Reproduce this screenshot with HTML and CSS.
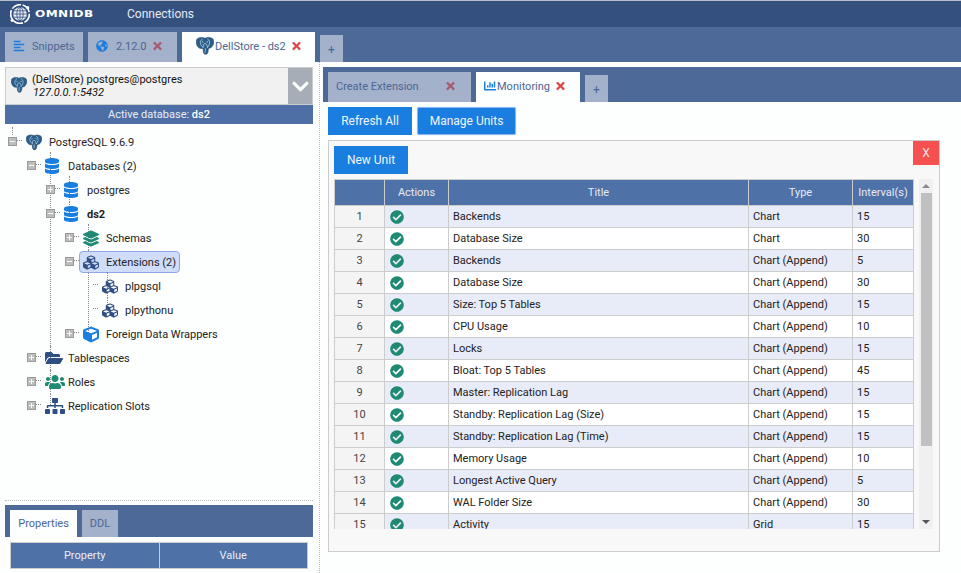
FILE: index.html
```html
<!DOCTYPE html>
<html lang="en">
<head>
<meta charset="utf-8">
<title>OmniDB</title>
<link rel="stylesheet" href="styles.css">
</head>
<body>
<svg class="defs" width="0" height="0" aria-hidden="true">
  <defs>
    <symbol id="i-db" viewBox="0 0 448 512"><path d="M448 73.143v45.714C448 159.143 347.667 192 224 192S0 159.143 0 118.857V73.143C0 32.857 100.333 0 224 0s224 32.857 224 73.143zM448 176v102.857C448 319.143 347.667 352 224 352S0 319.143 0 278.857V176c48.125 33.143 136.208 48.572 224 48.572S399.874 209.143 448 176zm0 160v102.857C448 479.143 347.667 512 224 512S0 479.143 0 438.857V336c48.125 33.143 136.208 48.572 224 48.572S399.874 369.143 448 336z"/></symbol>
    <symbol id="i-check" viewBox="0 0 512 512"><path d="M504 256c0 136.967-111.033 248-248 248S8 392.967 8 256 119.033 8 256 8s248 111.033 248 248zM227.314 387.314l184-184c6.248-6.248 6.248-16.379 0-22.627l-22.627-22.627c-6.248-6.249-16.379-6.249-22.628 0L216 308.118l-70.059-70.059c-6.248-6.248-16.379-6.248-22.628 0l-22.627 22.627c-6.248 6.248-6.248 16.379 0 22.627l104 104c6.249 6.249 16.379 6.249 22.628.001z"/></symbol>
    <symbol id="i-times" viewBox="0 0 352 512"><path d="M242.72 256l100.07-100.07c12.28-12.28 12.28-32.19 0-44.48l-22.24-22.24c-12.28-12.28-32.19-12.28-44.48 0L176 189.28 75.93 89.21c-12.28-12.28-32.19-12.28-44.48 0L9.21 111.45c-12.28 12.28-12.28 32.19 0 44.48L109.28 256 9.21 356.07c-12.28 12.28-12.28 32.19 0 44.48l22.24 22.24c12.28 12.28 32.2 12.28 44.48 0L176 322.72l100.07 100.07c12.28 12.28 32.2 12.28 44.48 0l22.24-22.24c12.28-12.28 12.28-32.19 0-44.48L242.72 256z"/></symbol>
    <symbol id="i-chevron" viewBox="0 0 448 512"><path d="M207.029 381.476L12.686 187.132c-9.373-9.373-9.373-24.569 0-33.941l22.667-22.667c9.357-9.357 24.522-9.375 33.901-.04L224 284.505l154.745-154.021c9.379-9.335 24.544-9.317 33.901.04l22.667 22.667c9.373 9.373 9.373 24.569 0 33.941L240.971 381.476c-9.373 9.372-24.569 9.372-33.942 0z"/></symbol>
    <symbol id="i-users" viewBox="0 0 640 512"><path d="M96 224c35.3 0 64-28.7 64-64s-28.7-64-64-64-64 28.7-64 64 28.7 64 64 64zm448 0c35.3 0 64-28.7 64-64s-28.7-64-64-64-64 28.7-64 64 28.7 64 64 64zm32 32h-64c-17.6 0-33.5 7.1-45.1 18.6 40.3 22.1 68.9 62 75.1 109.4h66c17.7 0 32-14.3 32-32v-32c0-35.3-28.7-64-64-64zm-256 0c61.9 0 112-50.1 112-112S381.9 32 320 32 208 82.1 208 144s50.1 112 112 112zm76.8 32h-8.3c-20.8 10-43.9 16-68.5 16s-47.6-6-68.5-16h-8.3C179.6 288 128 339.6 128 403.2V432c0 26.5 21.5 48 48 48h288c26.5 0 48-21.5 48-48v-28.8c0-63.6-51.6-115.2-115.2-115.2zm-223.7-13.4C161.5 263.1 145.6 256 128 256H64c-35.3 0-64 28.7-64 64v32c0 17.7 14.3 32 32 32h65.9c6.3-47.4 34.9-87.3 75.2-109.4z"/></symbol>
    <symbol id="i-sitemap" viewBox="0 0 640 512"><path d="M128 352H32c-17.67 0-32 14.33-32 32v96c0 17.67 14.33 32 32 32h96c17.67 0 32-14.33 32-32v-96c0-17.67-14.33-32-32-32zm-24-80h192v48h48v-48h192v48h48v-57.59c0-21.17-17.23-38.41-38.41-38.41H344v-64h40c17.67 0 32-14.33 32-32V32c0-17.67-14.33-32-32-32H256c-17.67 0-32 14.33-32 32v96c0 17.67 14.33 32 32 32h40v64H94.41C73.23 224 56 241.23 56 262.41V320h48v-48zm264 80h-96c-17.67 0-32 14.33-32 32v96c0 17.67 14.33 32 32 32h96c17.67 0 32-14.33 32-32v-96c0-17.67-14.33-32-32-32zm240 0h-96c-17.67 0-32 14.33-32 32v96c0 17.67 14.33 32 32 32h96c17.67 0 32-14.33 32-32v-96c0-17.67-14.33-32-32-32z"/></symbol>
    <symbol id="i-folder" viewBox="0 0 576 512"><path d="M572.694 292.093L500.27 416.248A63.997 63.997 0 0 1 444.989 448H45.025c-18.523 0-30.064-20.093-20.731-36.093l72.424-124.155A64 64 0 0 1 152 256h399.964c18.523 0 30.064 20.093 20.73 36.093zM152 224h328v-48c0-26.51-21.49-48-48-48H272l-64-64H48C21.49 64 0 85.49 0 112v278.046l69.077-118.418C86.214 242.25 117.989 224 152 224z"/></symbol>
    <symbol id="i-cube" viewBox="0 0 512 512"><path d="M239.1 6.3l-208 78c-18.7 7-31.1 25-31.1 45v225.1c0 18.2 10.3 34.8 26.5 42.9l208 104c13.5 6.8 29.4 6.8 42.9 0l208-104c16.3-8.1 26.5-24.8 26.5-42.9V129.3c0-20-12.4-37.9-31.1-44.9l-208-78C262 2.2 250 2.2 239.1 6.3zM256 68.4l192 72v1.1l-192 78-192-78v-1.1l192-72zm32 356V275.5l160-65v133.9l-160 80z"/></symbol>
    <symbol id="i-cubes" viewBox="0 0 512 512"><path d="M488.6 250.2L392 214V105.5c0-15-9.3-28.4-23.4-33.7l-100-37.5c-8.1-3.1-17.1-3.1-25.3 0l-100 37.5c-14.1 5.3-23.4 18.7-23.4 33.7V214l-96.6 36.2C9.3 255.5 0 268.9 0 283.9V394c0 13.6 7.7 26.1 19.9 32.2l100 50c10.1 5.1 22.1 5.1 32.2 0l103.9-52 103.9 52c10.1 5.1 22.1 5.1 32.2 0l100-50c12.2-6.1 19.9-18.6 19.9-32.2V283.9c0-15-9.3-28.4-23.4-33.7zM358 214.8l-85 31.9v-68.2l85-37v73.3zM154 104.1l102-38.2 102 38.2v.6l-102 41.4-102-41.4v-.6zm84 291.1l-85 42.5v-79.1l85-38.8v75.4zm0-112l-102 41.4-102-41.4v-.6l102-38.2 102 38.2v.6zm240 112l-85 42.5v-79.1l85-38.8v75.4zm0-112l-102 41.4-102-41.4v-.6l102-38.2 102 38.2v.6z"/></symbol>
    <symbol id="i-layers" viewBox="0 0 512 512"><path d="M12.41 148.02l232.94 105.67c6.8 3.09 14.49 3.09 21.29 0l232.94-105.67c16.55-7.51 16.55-32.52 0-40.03L266.65 2.31a25.607 25.607 0 0 0-21.29 0L12.41 107.98c-16.55 7.51-16.55 32.53 0 40.04zm487.18 88.28l-58.09-26.33-161.64 73.27c-7.56 3.43-15.59 5.17-23.86 5.17s-16.29-1.74-23.86-5.17L70.51 209.97l-58.1 26.33c-16.55 7.5-16.55 32.5 0 40l232.94 105.59c6.8 3.08 14.49 3.08 21.29 0L499.59 276.3c16.55-7.5 16.55-32.5 0-40zm0 127.8l-57.87-26.23-161.86 73.37c-7.56 3.43-15.59 5.17-23.86 5.17s-16.29-1.74-23.86-5.17L70.29 337.87 12.41 364.1c-16.55 7.5-16.55 32.5 0 40l232.94 105.59c6.8 3.08 14.49 3.08 21.29 0L499.59 404.1c16.55-7.5 16.55-32.5 0-40z"/></symbol>
    <symbol id="i-align" viewBox="0 0 448 512"><path d="M12.83 352h262.34A12.82 12.82 0 0 0 288 339.17v-38.34A12.82 12.82 0 0 0 275.17 288H12.83A12.82 12.82 0 0 0 0 300.83v38.34A12.82 12.82 0 0 0 12.83 352zm0-256h262.34A12.82 12.82 0 0 0 288 83.17V44.83A12.82 12.82 0 0 0 275.17 32H12.83A12.82 12.82 0 0 0 0 44.83v38.34A12.82 12.82 0 0 0 12.83 96zM432 160H16a16 16 0 0 0-16 16v32a16 16 0 0 0 16 16h416a16 16 0 0 0 16-16v-32a16 16 0 0 0-16-16zm0 256H16a16 16 0 0 0-16 16v32a16 16 0 0 0 16 16h416a16 16 0 0 0 16-16v-32a16 16 0 0 0-16-16z"/></symbol>
    <symbol id="i-chart" viewBox="0 0 512 512"><path d="M332.8 320h38.4c6.4 0 12.8-6.4 12.8-12.8V172.8c0-6.4-6.4-12.8-12.8-12.8h-38.4c-6.4 0-12.8 6.4-12.8 12.8v134.4c0 6.4 6.4 12.8 12.8 12.8zm96 0h38.4c6.4 0 12.8-6.4 12.8-12.8V76.8c0-6.4-6.4-12.8-12.8-12.8h-38.4c-6.4 0-12.8 6.4-12.8 12.8v230.4c0 6.4 6.4 12.8 12.8 12.8zm-288 0h38.4c6.4 0 12.8-6.4 12.8-12.8v-70.4c0-6.4-6.4-12.8-12.8-12.8h-38.4c-6.4 0-12.8 6.4-12.8 12.8v70.4c0 6.4 6.4 12.8 12.8 12.8zm96 0h38.4c6.4 0 12.8-6.4 12.8-12.8V108.8c0-6.4-6.4-12.8-12.8-12.8h-38.4c-6.4 0-12.8 6.4-12.8 12.8v198.4c0 6.4 6.4 12.8 12.8 12.8zM496 384H64V80c0-8.84-7.16-16-16-16H16C7.16 64 0 71.16 0 80v336c0 17.67 14.33 32 32 32h464c8.84 0 16-7.16 16-16v-32c0-8.84-7.16-16-16-16z"/></symbol>
    <symbol id="i-globe" viewBox="0 0 496 512"><path d="M248 8C111.03 8 0 119.03 0 256s111.03 248 248 248 248-111.03 248-248S384.97 8 248 8zm82.29 357.6c-3.9 3.88-7.99 7.95-11.31 11.28-2.99 3-5.1 6.7-6.17 10.71-1.51 5.66-2.73 11.38-4.77 16.87l-17.39 46.85c-13.76 3-28 4.69-42.65 4.69v-27.38c1.69-12.62-7.64-36.26-22.63-51.25-6-6-9.37-14.14-9.37-22.63v-32.01c0-11.64-6.27-22.34-16.46-27.97-14.37-7.95-34.81-19.06-48.81-26.11-11.48-5.78-22.1-13.14-31.65-21.75l-.8-.72a114.792 114.792 0 0 1-18.06-20.74c-9.38-13.77-24.66-36.42-34.59-51.14 20.47-45.5 57.36-82.04 103.2-101.89l24.01 12.01C203.48 89.74 216 82.01 216 70.11v-11.3c7.99-1.29 16.12-2.11 24.48-2.45l28.3 28.3c6.25 6.25 6.25 16.38 0 22.63L264 112l-10.34 10.34c-3.12 3.12-3.12 8.19 0 11.31l4.69 4.69c3.12 3.12 3.12 8.19 0 11.31l-8 8a8.008 8.008 0 0 1-5.66 2.34h-8.99c-2.08 0-4.08.81-5.58 2.27l-9.92 9.65a8.008 8.008 0 0 0-1.58 9.31l15.59 31.19c2.66 5.32-1.21 11.58-7.15 11.58h-5.64c-1.93 0-3.79-.7-5.24-1.96l-9.28-8.06a16.017 16.017 0 0 0-15.55-3.1l-31.17 10.39a11.95 11.95 0 0 0-8.17 11.34c0 4.53 2.56 8.66 6.61 10.69l11.08 5.54c9.41 4.71 19.79 7.16 30.31 7.16s22.59 27.29 32 32h66.75c8.49 0 16.62 3.37 22.63 9.37l13.69 13.69a30.503 30.503 0 0 1 8.93 21.57 46.536 46.536 0 0 1-13.72 32.98zM417 274.25c-5.79-1.45-10.84-5-14.15-9.97l-17.98-26.97a23.97 23.97 0 0 1 0-26.62l19.59-29.38c2.32-3.47 5.5-6.29 9.24-8.15l12.98-6.49C440.2 193.59 448 223.87 448 256c0 8.67-.74 17.16-1.82 25.54L417 274.25z"/></symbol>
    <symbol id="i-pg" viewBox="0 0 24 24">
      <path fill="#2a5f8c" stroke="#1d3f60" stroke-width=".8" d="M1.500 2.500C5 .2 9 .2 12 1.800 15 .2 19 .2 22.500 2.500c2.300 3 1.300 7.500-1.300 10.500-1 1.500-3 2-4.700 2L16 20c-.5 3-4 4-5.500 2-1-1.500-1-5-1-7-2.500.5-4.500.5-6-1C.3 11-.7 5.500 1.500 2.500z"/>
      <path fill="none" stroke="#dce7f1" stroke-width=".85" stroke-linecap="round" stroke-linejoin="round" d="M8.500 2.600C6 4 5.400 7 6.200 9.500c.5 1.500 1.600 3 3.300 4.200M15.500 2.600c2.500 1.400 3.100 4.400 2.300 6.900-.5 1.500-1.400 3-2.300 4.200M9.500 13.700c.3-2 .2-5 2.500-5s2.800 2.800 3.300 5M12.500 15.500c0 2 0 3.500-.5 5"/>
      <circle cx="9" cy="6.500" r=".8" fill="#dce7f1"/>
      <circle cx="15" cy="6.500" r=".8" fill="#dce7f1"/>
    </symbol>
  </defs>
</svg>

<div class="topline"></div>
<header class="header">
  <div class="logo">
    <svg class="logo-mark" viewBox="1 1 22 22" fill="none" stroke="#fff">
      <circle cx="12" cy="12" r="10.300" stroke-width="1.800" stroke-dasharray="11 1.800"/>
      <circle cx="12" cy="12" r="7.500" fill="#e8edf5" stroke="none"/>
      <g stroke="#34507e" stroke-width=".9"><ellipse cx="12" cy="12" rx="3.500" ry="7.500"/><path d="M12 4.500v15M4.500 12h15M5.500 8.500h13M5.500 15.500h13"/></g>
      <circle cx="3.500" cy="19" r="1.800" fill="#fff" stroke="none"/>
      <circle cx="20.500" cy="5" r="1.800" fill="#fff" stroke="none"/>
    </svg>
    <span class="logo-text">OMNIDB</span>
  </div>
  <span class="header-link">Connections</span>
</header>

<nav class="tabbar tabbar-outer">
  <div class="tab snip-tab"><svg class="ti ti-blue"><use href="#i-align"/></svg><span>Snippets</span></div>
  <div class="tab ver-tab"><svg class="ti ti-blue ti-globe"><use href="#i-globe"/></svg><span>2.12.0</span><svg class="x x-dim"><use href="#i-times"/></svg></div>
  <div class="tab tab-active ds-tab"><svg class="ti-pg"><use href="#i-pg"/></svg><span>DellStore - ds2</span><svg class="x"><use href="#i-times"/></svg></div>
  <div class="tab tab-add">+</div>
</nav>

<main class="workspace">
  <section class="left">
    <div class="conn">
      <svg class="conn-pg"><use href="#i-pg"/></svg>
      <div class="conn-text">
        <div>(DellStore) postgres@postgres</div>
        <div class="conn-host">127.0.0.1:5432</div>
      </div>
      <div class="conn-arrow"><svg class="chev"><use href="#i-chevron"/></svg></div>
    </div>
    <div class="active-db">Active database: <b>ds2</b></div>

    <div class="tree">
      <ul class="root">
        <li>
          <div class="row"><i class="tg minus"></i><svg class="ic"><use href="#i-pg"/></svg><span class="lb">PostgreSQL 9.6.9</span></div>
          <ul>
            <li>
              <div class="row"><i class="tg minus"></i><svg class="ic ic-db c-blue"><use href="#i-db"/></svg><span class="lb">Databases (2)</span></div>
              <ul>
                <li><div class="row"><i class="tg plus"></i><svg class="ic ic-db c-blue"><use href="#i-db"/></svg><span class="lb">postgres</span></div></li>
                <li>
                  <div class="row"><i class="tg minus"></i><svg class="ic ic-db c-blue"><use href="#i-db"/></svg><span class="lb lb-b">ds2</span></div>
                  <ul>
                    <li><div class="row"><i class="tg plus"></i><svg class="ic c-teal"><use href="#i-layers"/></svg><span class="lb">Schemas</span></div></li>
                    <li>
                      <div class="row"><i class="tg minus"></i><div class="sel"><svg class="ic c-navy"><use href="#i-cubes"/></svg><span class="lb">Extensions (2)</span></div></div>
                      <ul>
                        <li><div class="row"><i class="tg none"></i><svg class="ic c-navy"><use href="#i-cubes"/></svg><span class="lb">plpgsql</span></div></li>
                        <li><div class="row"><i class="tg none"></i><svg class="ic c-navy"><use href="#i-cubes"/></svg><span class="lb">plpythonu</span></div></li>
                      </ul>
                    </li>
                    <li><div class="row"><i class="tg plus"></i><svg class="ic c-blue"><use href="#i-cube"/></svg><span class="lb">Foreign Data Wrappers</span></div></li>
                  </ul>
                </li>
              </ul>
            </li>
            <li><div class="row"><i class="tg plus"></i><svg class="ic ic-folder c-navy"><use href="#i-folder"/></svg><span class="lb">Tablespaces</span></div></li>
            <li><div class="row"><i class="tg plus"></i><svg class="ic ic-wide c-teal"><use href="#i-users"/></svg><span class="lb">Roles</span></div></li>
            <li><div class="row"><i class="tg plus"></i><svg class="ic ic-wide c-navy"><use href="#i-sitemap"/></svg><span class="lb">Replication Slots</span></div></li>
          </ul>
        </li>
      </ul>
    </div>

    <div class="tabbar tabbar-small">
      <div class="tab tab-active prop-tab"><span>Properties</span></div>
      <div class="tab ddl-tab"><span>DDL</span></div>
    </div>
    <div class="prop-head">
      <div class="prop-cell">Property</div>
      <div class="prop-cell">Value</div>
    </div>
  </section>

  <section class="right">
    <div class="tabbar tabbar-inner">
      <div class="tab ext-tab"><span>Create Extension</span><svg class="x x-dim"><use href="#i-times"/></svg></div>
      <div class="tab tab-active mon-tab"><svg class="ti-chart"><use href="#i-chart"/></svg><span>Monitoring</span><svg class="x"><use href="#i-times"/></svg></div>
      <div class="tab tab-add">+</div>
    </div>
    <div class="actions">
      <button class="btn btn-refresh">Refresh All</button>
      <button class="btn btn-manage">Manage Units</button>
    </div>
    <div class="panel">
      <div class="panel-top">
        <button class="btn btn-new">New Unit</button>
        <div class="close">X</div>
      </div>
      <div class="grid-wrap">
        <div class="grid-clip">
          <table class="grid">
            <colgroup><col class="c1"><col class="c2"><col class="c3"><col class="c4"><col class="c5"></colgroup>
            <thead><tr><th></th><th>Actions</th><th>Title</th><th>Type</th><th>Interval(s)</th></tr></thead>
            <tbody>
              <tr><td class="n">1</td><td><svg class="ok"><use href="#i-check"/></svg></td><td>Backends</td><td>Chart</td><td>15</td></tr>
              <tr><td class="n">2</td><td><svg class="ok"><use href="#i-check"/></svg></td><td>Database Size</td><td>Chart</td><td>30</td></tr>
              <tr><td class="n">3</td><td><svg class="ok"><use href="#i-check"/></svg></td><td>Backends</td><td>Chart (Append)</td><td>5</td></tr>
              <tr><td class="n">4</td><td><svg class="ok"><use href="#i-check"/></svg></td><td>Database Size</td><td>Chart (Append)</td><td>30</td></tr>
              <tr><td class="n">5</td><td><svg class="ok"><use href="#i-check"/></svg></td><td>Size: Top 5 Tables</td><td>Chart (Append)</td><td>15</td></tr>
              <tr><td class="n">6</td><td><svg class="ok"><use href="#i-check"/></svg></td><td>CPU Usage</td><td>Chart (Append)</td><td>10</td></tr>
              <tr><td class="n">7</td><td><svg class="ok"><use href="#i-check"/></svg></td><td>Locks</td><td>Chart (Append)</td><td>15</td></tr>
              <tr><td class="n">8</td><td><svg class="ok"><use href="#i-check"/></svg></td><td>Bloat: Top 5 Tables</td><td>Chart (Append)</td><td>45</td></tr>
              <tr><td class="n">9</td><td><svg class="ok"><use href="#i-check"/></svg></td><td>Master: Replication Lag</td><td>Chart (Append)</td><td>15</td></tr>
              <tr><td class="n">10</td><td><svg class="ok"><use href="#i-check"/></svg></td><td>Standby: Replication Lag (Size)</td><td>Chart (Append)</td><td>15</td></tr>
              <tr><td class="n">11</td><td><svg class="ok"><use href="#i-check"/></svg></td><td>Standby: Replication Lag (Time)</td><td>Chart (Append)</td><td>15</td></tr>
              <tr><td class="n">12</td><td><svg class="ok"><use href="#i-check"/></svg></td><td>Memory Usage</td><td>Chart (Append)</td><td>10</td></tr>
              <tr><td class="n">13</td><td><svg class="ok"><use href="#i-check"/></svg></td><td>Longest Active Query</td><td>Chart (Append)</td><td>5</td></tr>
              <tr><td class="n">14</td><td><svg class="ok"><use href="#i-check"/></svg></td><td>WAL Folder Size</td><td>Chart (Append)</td><td>30</td></tr>
              <tr><td class="n">15</td><td><svg class="ok"><use href="#i-check"/></svg></td><td>Activity</td><td>Grid</td><td>15</td></tr>
            </tbody>
          </table>
        </div>
        <div class="scroll">
          <i class="arrow-up"></i>
          <div class="track"><div class="thumb"></div></div>
          <i class="arrow-down"></i>
        </div>
      </div>
    </div>
  </section>
</main>
</body>
</html>
```
FILE: styles.css
```css
* { box-sizing: border-box; }
html, body { margin: 0; padding: 0; }
body {
  width: 961px;
  height: 573px;
  overflow: hidden;
  background: #fdfefe;
  font-family: Roboto, "Liberation Sans", sans-serif;
  font-size: 11px;
  color: #222;
  display: flex;
  flex-direction: column;
}
.defs { position: absolute; }
ul { list-style: none; margin: 0; padding: 0; }
button { font: inherit; }

.topline { height: 1px; background: #b9bfc9; flex: none; }
.header {
  height: 26px;
  flex: none;
  background: #34507e;
  display: flex;
  align-items: center;
  color: #e6ebf3;
}
.logo { display: flex; align-items: center; padding-left: 10px; width: 127px; }
.logo-mark { width: 20px; height: 20px; flex: none; }
.logo-text {
  margin-left: 5px;
  font-family: "DejaVu Sans", sans-serif;
  font-weight: 700;
  font-size: 8.5px;
  letter-spacing: .3px;
  color: #fff;
  transform: scaleX(1.42);
  transform-origin: left center;
}
.header-link { font-size: 12px; }

.tabbar { display: flex; align-items: flex-end; background: #4c6997; flex: none; }
.tabbar-outer { height: 35px; padding-left: 5px; gap: 5px; }
.tabbar-inner { height: 35px; padding-left: 5px; gap: 5px; }
.tabbar-small { height: 32px; padding-left: 5px; gap: 5px; }
.tab {
  height: 30px;
  display: flex;
  align-items: center;
  padding-bottom: 2px;
  background: #a3b1cb;
  color: #4b6694;
  white-space: nowrap;
  flex: none;
}
.tab-active { background: #fdfefe; }
.tab-add { width: 23px; height: 27px; justify-content: center; font-size: 12px; padding: 2px 0 0; }
.snip-tab { width: 78px; padding-left: 8px; }
.ver-tab { width: 89px; padding-left: 8px; }
.ds-tab { width: 133px; padding-left: 14px; }
.ext-tab { width: 143px; padding-left: 8px; }
.mon-tab { width: 104px; padding-left: 8px; }
.prop-tab { width: 67px; height: 27px; justify-content: center; padding-bottom: 0; }
.ddl-tab { width: 36px; height: 27px; justify-content: center; padding-bottom: 0; }

.ti { width: 12px; height: 12px; fill: #1a7de0; flex: none; margin-right: 7px; }
.ti-globe { margin-right: 8px; }
.ti-pg { width: 18px; height: 18px; flex: none; margin-right: 1px; }
.ti-chart { width: 12px; height: 12px; fill: #1a7de0; flex: none; margin-right: 1px; }
.x { width: 9px; height: 12px; fill: #e0434a; margin-left: 6px; flex: none; }
.x-dim { fill: #a85a6e; }
.ext-tab .x { margin-left: 27px; }

.workspace { flex: 1; display: flex; min-height: 0; }
.left { width: 320px; padding: 5px 6px 4px 5px; display: flex; flex-direction: column; border-right: 1px dotted #bbb; flex: none; }
.conn {
  height: 38px;
  flex: none;
  background: #f1f1f1;
  border: 1px solid #ccc;
  display: flex;
  align-items: center;
  color: #111;
}
.conn-pg { width: 16px; height: 18px; margin: 0 5px 2px 5px; flex: none; }
.conn-text { flex: 1; line-height: 13px; }
.conn-host { font-style: italic; padding-left: 1px; }
.conn-arrow { width: 24px; height: 100%; background: #a7adb6; display: flex; align-items: center; justify-content: center; flex: none; }
.chev { width: 17px; height: 19px; fill: #fdfefe; }
.active-db {
  height: 19px;
  flex: none;
  background: #4d6fa6;
  color: #e9edf5;
  text-align: center;
  line-height: 19px;
}
.active-db b { font-weight: 500; color: #fff; }

.tree {
  flex: 1;
  margin-top: 6px;
  min-height: 0;
  border-bottom: 1px dotted #bbb;
  margin-bottom: 4px;
}
.tree ul ul { margin-left: 19px; }
.tree li { position: relative; }
.tree li::before {
  content: "";
  position: absolute;
  left: 26px;
  top: 0;
  bottom: 0;
  border-left: 1px dotted #888;
}
.tree li:first-child::before { top: -2px; }
.tree li:last-child::before { bottom: auto; height: 11px; }
.tree li:first-child:last-child::before { height: 13px; }
.root > li::before { display: none; }
.root > li > .row::before {
  content: "";
  position: absolute;
  left: 7px;
  top: -3px;
  height: 8px;
  border-left: 1px dotted #888;
}
.row {
  position: relative;
  height: 24px;
  display: flex;
  align-items: center;
  padding-left: 3px;
}
.row::after {
  content: "";
  position: absolute;
  left: 12px;
  top: 10px;
  width: 5px;
  border-top: 1px dotted #888;
}
.tg {
  position: relative;
  z-index: 1;
  width: 9px;
  height: 9px;
  flex: none;
  margin: -2px 9px 0 0;
  background-color: #bdbdbd;
  border: 1px solid #9a9a9a;
}
.tg.minus { background-image: linear-gradient(#f7f7f7, #f7f7f7); background-size: 5px 1px; background-repeat: no-repeat; background-position: center; }
.tg.plus {
  background-image: linear-gradient(#f7f7f7, #f7f7f7), linear-gradient(#f7f7f7, #f7f7f7);
  background-size: 5px 1px, 1px 5px;
  background-repeat: no-repeat;
  background-position: center;
}
.tg.none { visibility: hidden; }
.ic { position: relative; z-index: 1; width: 16px; height: 17px; flex: none; margin-right: 7px; }
.ic-db { width: 14px; height: 16px; margin-right: 9px; }
.ic-folder { width: 18px; height: 16px; margin-right: 5px; }
.ic-wide { width: 20px; height: 16px; margin-right: 3px; }
.c-blue { fill: #1a7de0; }
.c-teal { fill: #1e8a73; }
.c-navy { fill: #2f4f84; }
.lb { white-space: nowrap; color: #222; }
.lb-b { font-weight: 700; }
.sel {
  display: flex;
  align-items: center;
  height: 22px;
  margin-left: -4px;
  padding: 0 3px 0 3px;
  background: #cfdcfa;
  border: 1px solid #8fa8e4;
  border-radius: 4px;
}

.prop-head {
  height: 27px;
  margin: 5px 5px 0;
  display: flex;
  flex: none;
  border: 1px solid #ccc;
  background: #4e71a8;
}
.prop-cell { flex: 1; color: #e9edf5; text-align: center; line-height: 25px; }
.prop-cell + .prop-cell { border-left: 1px solid #ccc; }

.right { flex: 1; min-width: 0; padding: 5px 0 0 3px; display: flex; flex-direction: column; }
.actions { display: flex; gap: 5px; padding: 5px 0 5px 5px; flex: none; }
.btn {
  height: 28px;
  border: 0;
  padding: 0;
  background: #1a7de0;
  color: #f1f6fd;
  font-size: 12px;
}
.btn-refresh { width: 84px; }
.btn-manage { width: 99px; border: 1px solid #8fb8f0; border-radius: 2px; box-shadow: 0 0 1px #8fb8f0; }
.btn-new { width: 74px; }
.panel {
  width: 612px;
  height: 412px;
  margin-left: 5px;
  background: #f8f8f8;
  border: 1px solid #ccc;
  padding: 5px 0 0 5px;
  flex: none;
}
.panel-top { display: flex; justify-content: space-between; align-items: flex-start; height: 33px; }
.close {
  position: relative;
  top: -5px;
  width: 26px;
  height: 24px;
  background: #f75050;
  color: #fbe6e6;
  text-align: center;
  line-height: 24px;
  font-size: 12px;
}
.grid-wrap { display: flex; height: 350px; }
.grid-clip { width: 580px; height: 350px; overflow: hidden; flex: none; }
.grid { border-collapse: collapse; table-layout: fixed; width: 579px; color: #222; }
.c1 { width: 50px; }
.c2 { width: 64px; }
.c3 { width: 300px; }
.c4 { width: 104px; }
.c5 { width: 61px; }
.grid th, .grid td { border: 1px solid #ccc; padding: 0 4px; overflow: hidden; white-space: nowrap; }
.grid th { height: 26px; background: #4e71a8; color: #e6ebf4; font-weight: 400; }
.grid td { height: 22px; background: #fff; }
.grid tbody tr:nth-child(odd) td { background: #e8ebf8; }
.grid td.n, .grid tbody tr:nth-child(odd) td.n { background: #f4f4f4; text-align: center; color: #444; }
.ok { display: block; width: 14px; height: 14px; fill: #1e8a73; margin-left: 1px; }
.scroll { width: 14px; margin-left: 5px; background: #f0f0f0; display: flex; flex-direction: column; align-items: center; flex: none; }
.track { flex: 1; width: 100%; padding: 0 1px 0 2px; }
.thumb { height: 253px; background: #c0c0c0; }
.arrow-up, .arrow-down { width: 0; height: 0; flex: none; border-left: 4px solid transparent; border-right: 4px solid transparent; margin: 5px 0; }
.arrow-up { border-bottom: 4px solid #8a8a8a; }
.arrow-down { border-top: 4px solid #555; }
```
